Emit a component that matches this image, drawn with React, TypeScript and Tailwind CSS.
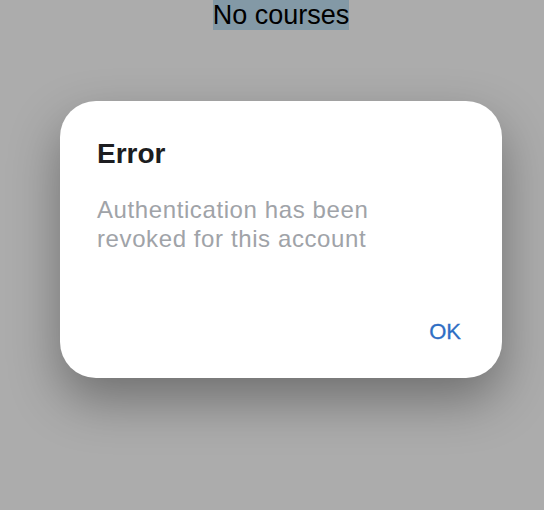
export default function App() {
  return (
    <div className="w-[544px] h-[510px] bg-[#acacac] overflow-hidden font-['Liberation_Sans',Arial,sans-serif]">
      <div className="flex justify-center pl-[18px]">
        <span className="bg-[#8399a6] text-black text-[27px] leading-[30px]">No courses</span>
      </div>

      <div className="mt-[71px] ml-[60px] mr-[42px] h-[277px] bg-white rounded-[36px] shadow-[0_22px_50px_rgba(0,0,0,0.35)] pl-[37px] pr-[41px] pt-[36px] flex flex-col">
        <h2 className="text-[28px] leading-[34px] font-bold text-[#1c1d20]">Error</h2>
        <p className="mt-[24px] text-[24px] leading-[29px] tracking-[0.6px] text-[#a0a3a8] w-[300px]">
          Authentication has been revoked for this account
        </p>
        <div className="mt-auto pb-[33px] flex justify-end">
          <button className="text-[22px] leading-[26px] text-[#2e6ec4] [-webkit-text-stroke:0.3px_#2e6ec4]">OK</button>
        </div>
      </div>
    </div>
  );
}
